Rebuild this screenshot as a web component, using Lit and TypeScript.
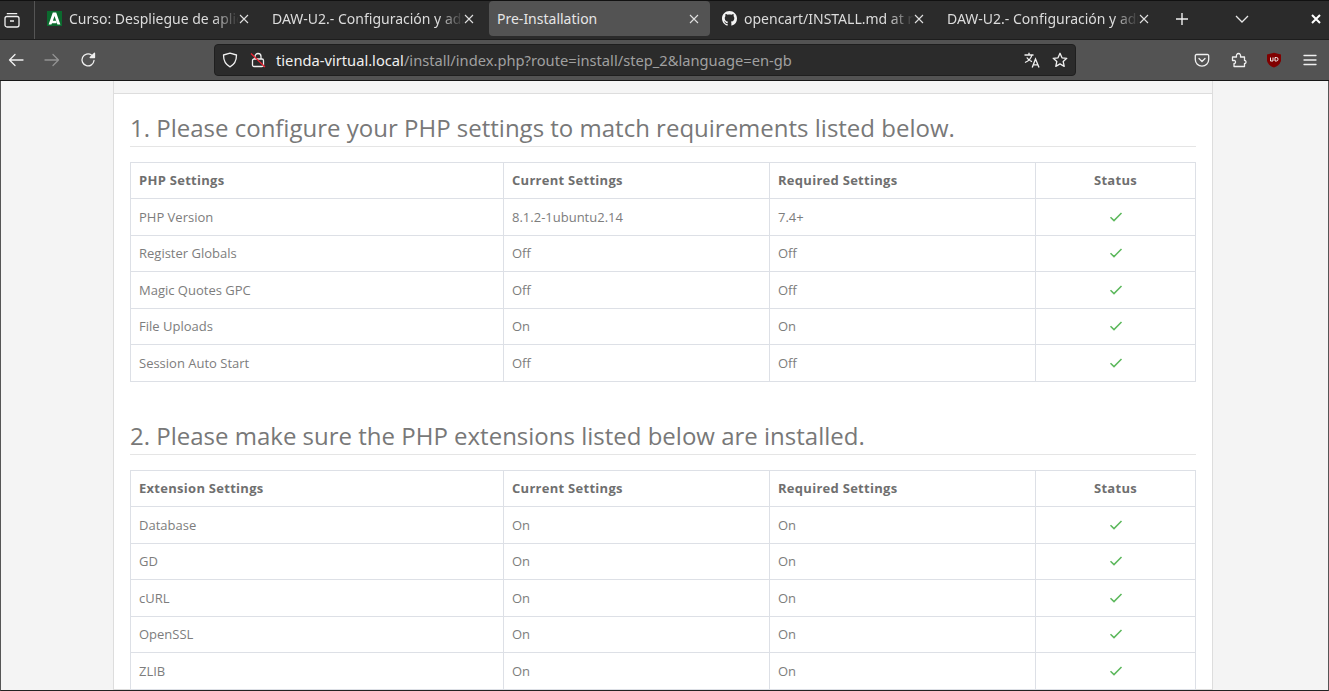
import { LitElement, html, css, svg } from "lit";
import { customElement } from "lit/decorators.js";

const php = [
  ["PHP Version", "8.1.2-1ubuntu2.14", "7.4+"],
  ["Register Globals", "Off", "Off"],
  ["Magic Quotes GPC", "Off", "Off"],
  ["File Uploads", "On", "On"],
  ["Session Auto Start", "Off", "Off"],
];
const ext = [
  ["Database", "On", "On"],
  ["GD", "On", "On"],
  ["cURL", "On", "On"],
  ["OpenSSL", "On", "On"],
  ["ZLIB", "On", "On"],
];
const tabs = [
  { t: "Curso: Despliegue de aplicaciones", icon: "a" },
  { t: "DAW-U2.- Configuración y administración" },
  { t: "Pre-Installation", active: true },
  { t: "opencart/INSTALL.md at master", icon: "gh" },
  { t: "DAW-U2.- Configuración y administración" },
];
const check = svg`<svg class="chk" width="14" height="12" viewBox="0 0 14 12"><path d="M1.5 6.2 L5 9.6 L12.5 2" fill="none" stroke="#5cb85c" stroke-width="1.5"/></svg>`;
const xIcon = svg`<svg class="x" width="10" height="10" viewBox="0 0 10 10"><path d="M1 1L9 9M9 1L1 9" stroke="#e0e0e0" stroke-width="1.1" fill="none"/></svg>`;
const ic = (w: number, d: any) => svg`<svg width="${w}" height="${w}" viewBox="0 0 16 16" fill="none" stroke="#f0f0f0" stroke-width="1.3" stroke-linejoin="round" stroke-linecap="round">${d}</svg>`;

@customElement("app-root")
export class AppRoot extends LitElement {
  static styles = css`
    :host { display: block; width: 1329px; height: 691px; overflow: hidden; background: #f4f4f4; font-family: "Open Sans", sans-serif; }
    .tabbar { height: 38px; background: #2b2b2b; border-top: 1px solid #111; display: flex; align-items: flex-start; border-bottom: 1px solid #1d1d1d; }
    .tabbox { width: 30px; height: 38px; padding-left: 4px; border-right: 1px solid #555; display: flex; align-items: center; flex: none; margin-right: 4px; }
    .tabs { display: flex; gap: 4px; }
    .tab { width: 221px; height: 35px; border-radius: 4px; box-sizing: border-box; padding: 0 8px; display: flex; align-items: center; font: 14px "Noto Sans", sans-serif; color: #dcdcdc; }
    .tab.active { background: #535353; color: #e6e6e6; }
    .tab .lbl { flex: 1; min-width: 0; white-space: nowrap; overflow: hidden; -webkit-mask-image: linear-gradient(90deg, #000 calc(100% - 26px), transparent 100%); mask-image: linear-gradient(90deg, #000 calc(100% - 26px), transparent 100%); }
    .tab.active .lbl { -webkit-mask-image: none; mask-image: none; }
    .fav { flex: none; width: 15px; height: 15px; margin-right: 7px; display: block; }
    .x { flex: none; margin: 0 3px 0 0; }
    .barend { display: flex; align-items: center; height: 35px; color: #eee; }
    .plus { margin-left: 15px; }
    .chev { margin-left: 46px; }
    .wclose { margin-left: 62px; }
    .toolbar { height: 40px; background: #535353; display: flex; align-items: center; border-bottom: 1px solid #161616; }
    .nav { display: flex; align-items: center; gap: 20px; padding-left: 8px; width: 214px; box-sizing: border-box; flex: none; }
    .url { width: 862px; height: 32px; box-sizing: border-box; background: #2b2b2b; border: 1px solid #1f1f1f; border-radius: 4px; display: flex; align-items: center; padding: 0 7px; flex: none; font: 14.7px "Noto Sans", sans-serif; color: #a0a0a0; }
    .url b { font-weight: 400; color: #f0f0f0; }
    .urltext { margin-left: 10px; flex: 1; white-space: nowrap; }
    .shield { margin-right: 12px; display: flex; }
    .star { display: flex; }
    .trans { margin-right: 12px; }
    .tools { display: flex; align-items: center; flex: 1; padding-left: 118px; gap: 19px; }
    .puzzle { margin-left: 2px; display: flex; }
    .burger { margin-left: 1px; display: flex; }
    .fwd { opacity: .4; display: flex; }
    .page { height: 609px; overflow: hidden; padding-left: 112px; border-left: 1px solid #555; border-right: 1px solid #555; border-bottom: 1px solid #222; }
    .panel { width: 1100px; box-sizing: border-box; border: 1px solid #ddd; border-top: 0; background: #fff; height: 100%; }
    .strip { height: 12px; background: #f5f5f5; border-bottom: 1px solid #ddd; }
    .body { padding: 16px 16px 0; }
    h3 { margin: 0 0 14.5px; font-size: 24px; line-height: 36px; font-weight: 400; color: #787878; border-bottom: 1px solid #e5e5e5; }
    table { width: 100%; border-collapse: collapse; table-layout: fixed; font-size: 13px; line-height: 19.5px; color: #7d7d7d; margin-bottom: 36.5px; }
    th, td { border: 1px solid #dde0e6; padding: 8px; text-align: left; font-weight: 400; }
    td { padding-top: 8.75px; padding-bottom: 7.25px; }
    th { font-weight: 700; color: #6f6f6f; letter-spacing: .28px; }
    .c1 { width: 373px; } .c2 { width: 266px; } .c3 { width: 266px; }
    .ctr { text-align: center; }
    .ctr svg { vertical-align: -1px; }
  `;

  private section(title: string, head: string, rows: string[][]) {
    return html`<h3>${title}</h3>
      <table>
        <colgroup><col class="c1"><col class="c2"><col class="c3"><col></colgroup>
        <thead><tr><th>${head}</th><th>Current Settings</th><th>Required Settings</th><th class="ctr">Status</th></tr></thead>
        <tbody>${rows.map(r => html`<tr><td>${r[0]}</td><td>${r[1]}</td><td>${r[2]}</td><td class="ctr">${check}</td></tr>`)}</tbody>
      </table>`;
  }

  render() {
    return html`
      <div class="tabbar">
        <div class="tabbox">
          <svg width="16" height="16" viewBox="0 0 16 16" fill="none" stroke="#f0f0f0" stroke-width="1.3"><rect x="1" y="4.5" width="14" height="10.5" rx="2"/><path d="M2.8 1.7H13.2M6 9H10"/></svg>
        </div>
        <div class="tabs">
          ${tabs.map(t => html`<div class="tab ${t.active ? "active" : ""}">
            ${t.icon === "a" ? svg`<svg class="fav" viewBox="0 0 15 15"><rect width="15" height="15" fill="#0b6a2e"/><path d="M1.6 13.5L5.8 1.5H9.2L13.4 13.5H10.4L7.5 5L5.9 9.8L9 9.8 9.6 12.2 5 12.2 4.4 13.5Z" fill="#fff"/></svg>` : ""}
            ${t.icon === "gh" ? svg`<svg class="fav" viewBox="0 0 16 16"><path fill="#f4f4f4" d="M8 0C3.58 0 0 3.58 0 8c0 3.54 2.29 6.53 5.47 7.59.4.07.55-.17.55-.38 0-.19-.01-.82-.01-1.49-2.01.37-2.53-.49-2.69-.94-.09-.23-.48-.94-.82-1.13-.28-.15-.68-.52-.01-.53.63-.01 1.08.58 1.23.82.72 1.21 1.87.87 2.33.66.07-.52.28-.87.51-1.07-1.78-.2-3.64-.89-3.64-3.95 0-.87.31-1.59.82-2.15-.08-.2-.36-1.02.08-2.12 0 0 .67-.21 2.2.82.64-.18 1.32-.27 2-.27s1.36.09 2 .27c1.53-1.04 2.2-.82 2.2-.82.44 1.1.16 1.92.08 2.12.51.56.82 1.27.82 2.15 0 3.07-1.87 3.75-3.65 3.95.29.25.54.73.54 1.48 0 1.07-.01 1.93-.01 2.2 0 .21.15.46.55.38A8.01 8.01 0 0 0 16 8c0-4.42-3.58-8-8-8z"/></svg>` : ""}
            <span class="lbl">${t.t}</span>${xIcon}
          </div>`)}
        </div>
        <div class="barend">
          <svg class="plus" width="14" height="14" viewBox="0 0 14 14"><path d="M7 1V13M1 7H13" stroke="#f0f0f0" stroke-width="1.4"/></svg>
          <svg class="chev" width="14" height="8" viewBox="0 0 14 8"><path d="M1 1L7 7L13 1" stroke="#e8e8e8" stroke-width="1.3" fill="none"/></svg>
          <svg class="wclose" width="10" height="10" viewBox="0 0 10 10"><path d="M1 1L9 9M9 1L1 9" stroke="#fff" stroke-width="2"/></svg>
        </div>
      </div>
      <div class="toolbar">
        <div class="nav">
          ${ic(16, svg`<path d="M15 8H1.5M7 2.5L1.5 8L7 13.5"/>`)}
          <span class="fwd">${ic(16, svg`<path d="M1 8H14.5M9 2.5L14.5 8L9 13.5"/>`)}</span>
          ${ic(16, svg`<path d="M14 8.5A6 6 0 1 1 11.5 3"/><path d="M14.5 1.2V5.5H10.2Z" fill="#f0f0f0"/>`)}
        </div>
        <div class="url">
          <span class="shield">${ic(16, svg`<path d="M8 1.2L14.5 3C14.5 9 12.5 12.5 8 14.8C3.5 12.5 1.5 9 1.5 3Z"/>`)}</span>
          <svg width="16" height="16" viewBox="0 0 16 16" fill="none" stroke="#f0f0f0" stroke-width="1.3"><rect x="2.5" y="7" width="11" height="7.5" rx="1.5"/><path d="M5 7V4.5a3 3 0 0 1 6 0V7"/><path d="M1 1.5L15 15" stroke="#e23" stroke-width="1.3"/></svg>
          <span class="urltext"><b>tienda-virtual.local</b>/install/index.php?route=install/step_2&amp;language=en-gb</span>
          <svg class="trans" width="16" height="16" viewBox="0 0 16 16" fill="none" stroke="#f0f0f0" stroke-width="1.35"><path d="M.5 3H9.5M5 .8V3M7.8 3C7.2 6.5 4.5 9 1 10.5M2.8 5.5C4 7.5 5.5 8.7 8 9.7M8.2 15.5L11.5 7L15 15.5M9.5 12.8H13.8"/></svg>
          <span class="star">${ic(16, svg`<path d="M8 1.3L10 5.8L14.8 6.3L11.2 9.5L12.2 14.4L8 11.9L3.8 14.4L4.8 9.5L1.2 6.3L6 5.8Z"/>`)}</span>
        </div>
        <div class="tools">
          ${ic(16, svg`<path d="M2.5 2.5H13.5A1.2 1.2 0 0 1 14.7 3.7V7.5A6.7 6.7 0 0 1 1.3 7.5V3.7A1.2 1.2 0 0 1 2.5 2.5ZM5 6.5L8 9.5L11 6.5"/>`)}
          <span class="puzzle">${ic(16, svg`<path d="M1.5 5H5.5C5 3 6 1.5 7.5 1.5S10 3 9.5 5H13.5V8.5C15.5 8 15.5 12 13.5 11.5V14.5H3V11.5C5 12 5 8 3 8.5H1.5Z"/>`)}</span>
          <svg width="16" height="16" viewBox="0 0 16 16"><path d="M8 .8L15 2.6V9C14 12.5 11 14.5 8 15.4C5 14.5 2 12.5 1 9V2.6Z" fill="#800000"/><path d="M4.5 5.5V9H7V5.5M9 5.5V9H10.5Q12 9 12 7.2T10.5 5.5Z" fill="none" stroke="#eee" stroke-width="1"/></svg>
          <span class="burger">${ic(16, svg`<path d="M2 3.5H14M2 8H14M2 12.5H14"/>`)}</span>
        </div>
      </div>
      <div class="page">
        <div class="panel">
          <div class="strip"></div>
          <div class="body">
            ${this.section("1. Please configure your PHP settings to match requirements listed below.", "PHP Settings", php)}
            ${this.section("2. Please make sure the PHP extensions listed below are installed.", "Extension Settings", ext)}
          </div>
        </div>
      </div>
    `;
  }
}
